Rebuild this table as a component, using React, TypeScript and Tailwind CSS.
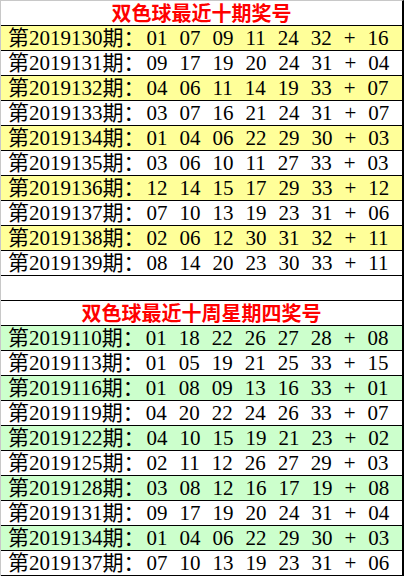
type Draw = { issue: string; reds: string[]; blue: string };

const recent: Draw[] = [
  { issue: "2019130", reds: ["01", "07", "09", "11", "24", "32"], blue: "16" },
  { issue: "2019131", reds: ["09", "17", "19", "20", "24", "31"], blue: "04" },
  { issue: "2019132", reds: ["04", "06", "11", "14", "19", "33"], blue: "07" },
  { issue: "2019133", reds: ["03", "07", "16", "21", "24", "31"], blue: "07" },
  { issue: "2019134", reds: ["01", "04", "06", "22", "29", "30"], blue: "03" },
  { issue: "2019135", reds: ["03", "06", "10", "11", "27", "33"], blue: "03" },
  { issue: "2019136", reds: ["12", "14", "15", "17", "29", "33"], blue: "12" },
  { issue: "2019137", reds: ["07", "10", "13", "19", "23", "31"], blue: "06" },
  { issue: "2019138", reds: ["02", "06", "12", "30", "31", "32"], blue: "11" },
  { issue: "2019139", reds: ["08", "14", "20", "23", "30", "33"], blue: "11" },
];

const thursdays: Draw[] = [
  { issue: "2019110", reds: ["01", "18", "22", "26", "27", "28"], blue: "08" },
  { issue: "2019113", reds: ["01", "05", "19", "21", "25", "33"], blue: "15" },
  { issue: "2019116", reds: ["01", "08", "09", "13", "16", "33"], blue: "01" },
  { issue: "2019119", reds: ["04", "20", "22", "24", "26", "33"], blue: "07" },
  { issue: "2019122", reds: ["04", "10", "15", "19", "21", "23"], blue: "02" },
  { issue: "2019125", reds: ["02", "11", "12", "26", "27", "29"], blue: "03" },
  { issue: "2019128", reds: ["03", "08", "12", "16", "17", "19"], blue: "08" },
  { issue: "2019131", reds: ["09", "17", "19", "20", "24", "31"], blue: "04" },
  { issue: "2019134", reds: ["01", "04", "06", "22", "29", "30"], blue: "03" },
  { issue: "2019137", reds: ["07", "10", "13", "19", "23", "31"], blue: "06" },
];

function Row({ d, tint }: { d: Draw; tint: string }) {
  return (
    <div className={`h-[25px] border-t border-black flex items-center pl-[7px] text-[21px] leading-[24px] text-black ${tint}`}>
      <span>第{d.issue}期：</span>
      <div className="flex gap-[12px] ml-[2px]">
        {d.reds.map((n, i) => (
          <span key={i}>{n}</span>
        ))}
        <span>+</span>
        <span>{d.blue}</span>
      </div>
    </div>
  );
}

function Title({ text }: { text: string }) {
  return (
    <div className="h-[24px] flex items-end justify-center text-[20px] leading-[22px] font-bold text-[#ff0000]">
      {text}
    </div>
  );
}

export default function App() {
  return (
    <div
      className="w-[404px] h-[576px] bg-white border-l border-t border-[#c8c8c8] border-r-2 border-r-black overflow-hidden"
      style={{ fontFamily: '"Liberation Serif", "Noto Sans CJK SC", serif' }}
    >
      <Title text="双色球最近十期奖号" />
      {recent.map((d, i) => (
        <Row key={d.issue} d={d} tint={i % 2 === 0 ? "bg-[#ffff99]" : "bg-white"} />
      ))}
      {/* blank spacer row */}
      <div className="h-[25px] border-t border-black" />
      <div className="border-t border-black">
        <Title text="双色球最近十周星期四奖号" />
      </div>
      {thursdays.map((d, i) => (
        <Row key={d.issue} d={d} tint={i % 2 === 0 ? "bg-[#ccffcc]" : "bg-white"} />
      ))}
      <div className="border-t border-black" />
    </div>
  );
}
